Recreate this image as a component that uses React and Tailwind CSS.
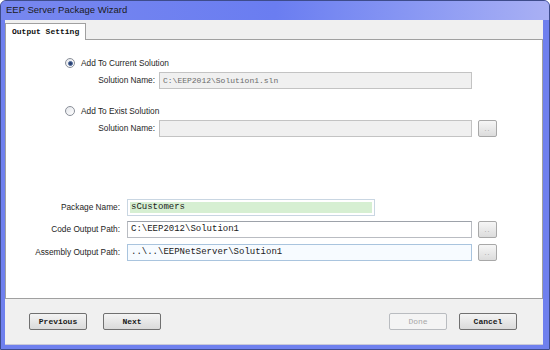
import React from "react";

const sans = { fontFamily: '"Liberation Sans", Arial, sans-serif' };
const mono = { fontFamily: '"Liberation Mono", "Courier New", monospace' };

const Radio = ({ checked }) => (
  <div className="w-[10px] h-[10px] rounded-full border border-[#8a8f99] bg-gradient-to-br from-[#e4e6ea] to-[#ffffff] flex items-center justify-center">
    {checked && (
      <div className="w-[5px] h-[5px] rounded-full bg-[#2a3f6e] border border-[#4d6a9e]" />
    )}
  </div>
);

const Browse = () => (
  <button className="ml-[6px] w-[19px] h-[17px] rounded-[2px] border border-[#a8a8a8] bg-gradient-to-b from-[#f6f6f6] to-[#dcdcdc] text-[#9a9a9a] text-[7px] leading-none flex items-center justify-center tracking-[1px]">
    ..
  </button>
);

const WinButton = ({ children, disabled }) => (
  <button
    style={mono}
    className={
      disabled
        ? "w-[58px] h-[17px] rounded-[2px] border border-[#b9bcc0] bg-[#f4f4f4] text-[#a8a8a8] text-[8px] leading-none"
        : "w-[58px] h-[17px] rounded-[2px] border border-[#707070] bg-gradient-to-b from-[#f4f4f4] to-[#dadada] text-[#1a1a1a] font-bold text-[8px] leading-none"
    }
  >
    {children}
  </button>
);

export default function App() {
  return (
    <div className="w-[550px] h-[350px] bg-[#6f80ee] border border-[#3e4c8c] rounded-t-[6px] flex flex-col overflow-hidden">
      {/* title bar */}
      <div className="h-[19px] shrink-0 bg-gradient-to-r from-[#7787ef] via-[#6a7df1] to-[#a9b0f4] flex items-center pl-[5px]">
        <span style={sans} className="text-[9.5px] text-[#1b1b1b]">
          EEP Server Package Wizard
        </span>
      </div>

      <div className="flex-1 ml-[4px] mr-[6px] mb-[4px] bg-[#f0f0f0] flex flex-col border-b border-[#c8c8d8]">
        {/* tab strip */}
        <div className="h-[19px] shrink-0 flex items-end">
          <div
            style={mono}
            className="w-[81px] h-[17px] bg-white border border-b-0 border-[#a0a0a0] -mb-px relative z-10 pl-[6px] flex items-center text-[8px] font-bold text-[#111]"
          >
            Output Setting
          </div>
        </div>

        {/* tab panel */}
        <div style={sans} className="h-[260px] shrink-0 bg-white border border-[#a0a0a0] text-[8.3px] text-[#1e1e1e]">
          <div className="pl-[59px] pt-[17px] h-[12px] box-content flex items-center gap-[6px]">
            <Radio checked />
            <span>Add To Current Solution</span>
          </div>
          <div className="mt-[3px] flex items-center h-[17px]">
            <div className="w-[149px] text-right">Solution Name:</div>
            <div
              style={mono}
              className="ml-[4px] w-[313px] h-[17px] border border-[#c3c3c3] bg-[#f0f0f0] text-[8px] text-[#6b6b6b] pl-[3px] flex items-center"
            >
              C:\EEP2012\Solution1.sln
            </div>
          </div>

          <div className="mt-[16px] pl-[59px] h-[12px] flex items-center gap-[6px]">
            <Radio />
            <span>Add To Exist Solution</span>
          </div>
          <div className="mt-[3px] flex items-center h-[17px]">
            <div className="w-[149px] text-right">Solution Name:</div>
            <div className="ml-[4px] w-[313px] h-[17px] border border-[#c3c3c3] bg-[#f0f0f0]" />
            <Browse />
          </div>

          <div className="mt-[62px] flex items-center h-[17px]">
            <div className="w-[114px] text-right">Package Name:</div>
            <div
              style={mono}
              className="ml-[7px] w-[248px] h-[17px] border border-[#c9d6e2] bg-white p-[2px] flex"
            >
              <div className="flex-1 bg-[#d6efd2] text-[9px] text-[#1a1a1a] pl-[1px] flex items-center">
                sCustomers
              </div>
            </div>
          </div>
          <div className="mt-[5px] flex items-center h-[17px]">
            <div className="w-[114px] text-right">Code Output Path:</div>
            <div
              style={mono}
              className="ml-[7px] w-[345px] h-[17px] border border-[#b9bcc2] border-t-[#9da2aa] bg-white text-[9px] text-[#1a1a1a] pl-[3px] flex items-center"
            >
              C:\EEP2012\Solution1
            </div>
            <Browse />
          </div>
          <div className="mt-[6px] flex items-center h-[17px]">
            <div className="w-[114px] text-right">Assembly Output Path:</div>
            <div
              style={mono}
              className="ml-[7px] w-[345px] h-[17px] border border-[#a9c4de] bg-[#f7fbff] text-[9px] text-[#1a1a1a] pl-[3px] flex items-center"
            >
              ..\..\EEPNetServer\Solution1
            </div>
            <Browse />
          </div>
        </div>

        {/* buttons */}
        <div className="flex-1 flex items-start pt-[14px] pl-[24px] pr-[26px]">
          <div className="flex gap-[16px]">
            <WinButton>Previous</WinButton>
            <WinButton>Next</WinButton>
          </div>
          <div className="ml-auto flex gap-[12px]">
            <WinButton disabled>Done</WinButton>
            <WinButton>Cancel</WinButton>
          </div>
        </div>
      </div>
    </div>
  );
}
